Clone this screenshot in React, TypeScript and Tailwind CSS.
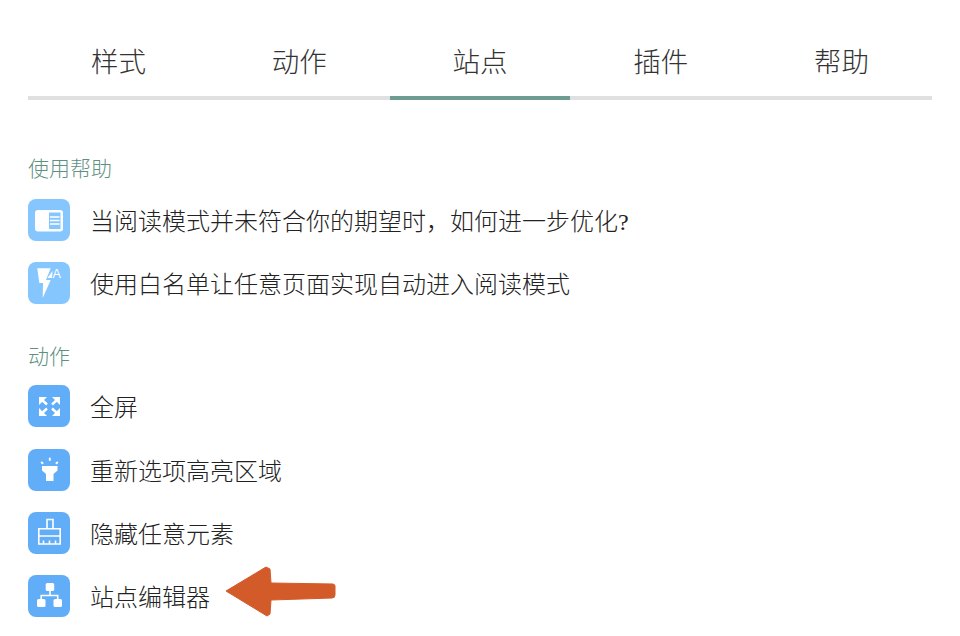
import type { ReactNode } from "react"

const font = { fontFamily: '"Liberation Serif", "Noto Sans CJK SC", serif' }

const tabs = ["样式", "动作", "站点", "插件", "帮助"]

function IconBox({ light, children }: { light?: boolean; children: ReactNode }) {
  return (
    <div className={`flex h-[42px] w-[42px] shrink-0 items-center justify-center rounded-[8px] ${light ? "bg-[#85c6ff]" : "bg-[#62adf7]"}`}>
      <svg width="42" height="42" viewBox="0 0 42 42" fill="none">
        {children}
      </svg>
    </div>
  )
}

function ReaderIcon() {
  return (
    <IconBox light>
      <rect x="7" y="11" width="28" height="21.500" rx="3" fill="#fff" />
      <rect x="21" y="13.500" width="11.500" height="16.500" fill="#85c6ff" />
      <path d="M22 18h9.500M22 21.500h9.500M22 25h9.500" stroke="#fff" strokeWidth="1.400" />
    </IconBox>
  )
}

function WhitelistIcon() {
  return (
    <IconBox light>
      <path d="M9.300 6.300h13.400L18 18h4.700l-8 18 .300-15h-3.700z" fill="#fff" />
      <path d="M19.500 16l5-7-.500 7z" fill="#fff" />
      <text x="24.500" y="15.500" fill="#fff" fontSize="12.500" fontFamily="Liberation Sans, sans-serif">A</text>
    </IconBox>
  )
}

function FullscreenIcon() {
  return (
    <IconBox>
      <path d="M11 12h8l-8 8zM32 12h-8l8 8zM11 31h8l-8-8zM32 31h-8l8-8z" fill="#fff" />
      <path d="M13 14l6 5.500M30 14l-6 5.500M13 29l6-5.500M30 29l-6-5.500" stroke="#fff" strokeWidth="2.400" />
    </IconBox>
  )
}

function FlashlightIcon() {
  return (
    <IconBox>
      <path d="M14 17h15.500v4.500L25.500 25v7h-7.500v-7L14 21.500z" fill="#fff" />
      <path d="M21.800 9.500v1.500M13.700 13.500l.800.600M29.300 13.500l-.800.600" stroke="#fff" strokeWidth="2" strokeLinecap="round" />
    </IconBox>
  )
}

function BrushIcon() {
  return (
    <IconBox>
      <path d="M19 16.500V7.500h6v9M10.800 16.800h21.400V32H10.800zM10.800 24h21.400" stroke="#fff" strokeWidth="1.600" />
      <path d="M15.500 32v-3.500M21.500 32v-3.500M27.500 32v-3.500" stroke="#fff" strokeWidth="1.600" />
    </IconBox>
  )
}

function SitemapIcon() {
  return (
    <IconBox>
      <rect x="17.700" y="8" width="8.500" height="8" rx="1.500" fill="#fff" />
      <rect x="9" y="24" width="8.500" height="8" rx="1.500" fill="#fff" />
      <rect x="25.500" y="24" width="8.500" height="8" rx="1.500" fill="#fff" />
      <path d="M22 16v4.500M13.200 24v-3.500h16.500V24" stroke="#fff" strokeWidth="1.600" />
    </IconBox>
  )
}

function Row({ icon, label, arrow }: { icon: ReactNode; label: string; arrow?: boolean }) {
  return (
    <div className="flex h-[42px] items-center gap-[20px]">
      {icon}
      <span className="whitespace-nowrap pt-[4px] text-[24px] leading-none font-light text-[#222]">{label}</span>
      {arrow && (
        <svg width="112" height="52" viewBox="0 0 112 52" className="mb-[10px] ml-[-5px]">
          <path
            d="M1 26 L41 2 L45 4 L46 18 L108 19 Q110 19.500 110 21 L110 30 Q110 33 107 33 L46 35 L45 49 L42 51 Z"
            fill="#d35b2a"
            stroke="#d35b2a"
            strokeWidth="1"
            strokeLinejoin="round"
          />
        </svg>
      )}
    </div>
  )
}

export default function App() {
  return (
    <div className="h-[636px] w-[960px] overflow-hidden bg-white px-[28px] pt-[28px]" style={font}>
      <div className="flex h-[72px] border-b-4 border-[#e0e0e0]">
        {tabs.map((t, i) => (
          <div
            key={t}
            className={`mb-[-4px] flex flex-1 justify-center pt-[17px] text-[27.500px] leading-[36px] font-light text-[#333] ${i === 2 ? "border-b-4 border-[#6f9c90]" : ""}`}
          >
            {t}
          </div>
        ))}
      </div>

      <div className="pt-[57px] text-[21px] leading-[24px] font-light text-[#5f9183]">使用帮助</div>
      <div className="mt-[18px] flex flex-col gap-[21px]">
        <Row icon={<ReaderIcon />} label="当阅读模式并未符合你的期望时，如何进一步优化?" />
        <Row icon={<WhitelistIcon />} label="使用白名单让任意页面实现自动进入阅读模式" />
      </div>

      <div className="mt-[41px] text-[21px] leading-[24px] font-light text-[#5f9183]">动作</div>
      <div className="mt-[16px] flex flex-col">
        <Row icon={<FullscreenIcon />} label="全屏" />
        <div className="mt-[22px]">
          <Row icon={<FlashlightIcon />} label="重新选项高亮区域" />
        </div>
        <div className="mt-[21px]">
          <Row icon={<BrushIcon />} label="隐藏任意元素" />
        </div>
        <div className="mt-[21px]">
          <Row icon={<SitemapIcon />} label="站点编辑器" arrow />
        </div>
      </div>
    </div>
  )
}
